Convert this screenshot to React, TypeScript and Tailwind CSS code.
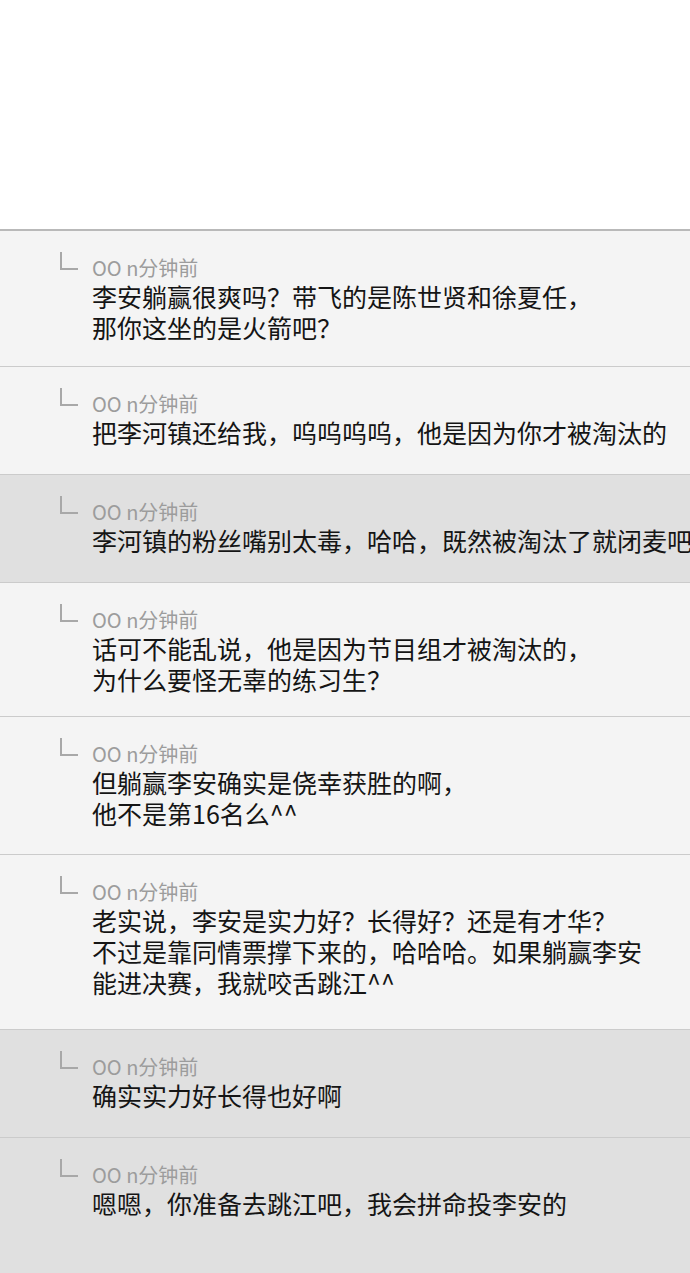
import React from 'react';

type Reply = {
  lines: string[];
  height: string;
  dark?: boolean;
};

const replies: Reply[] = [
  { lines: ['李安躺赢很爽吗？带飞的是陈世贤和徐夏任，', '那你这坐的是火箭吧？'], height: 'h-[136px]' },
  { lines: ['把李河镇还给我，呜呜呜呜，他是因为你才被淘汰的'], height: 'h-[108px]' },
  { lines: ['李河镇的粉丝嘴别太毒，哈哈，既然被淘汰了就闭麦吧'], height: 'h-[108px]', dark: true },
  { lines: ['话可不能乱说，他是因为节目组才被淘汰的，', '为什么要怪无辜的练习生？'], height: 'h-[134px]' },
  { lines: ['但躺赢李安确实是侥幸获胜的啊，', '他不是第16名么^^'], height: 'h-[138px]' },
  {
    lines: ['老实说，李安是实力好？长得好？还是有才华？', '不过是靠同情票撑下来的，哈哈哈。如果躺赢李安', '能进决赛，我就咬舌跳江^^'],
    height: 'h-[175px]',
  },
  { lines: ['确实实力好长得也好啊'], height: 'h-[108px]', dark: true },
  { lines: ['嗯嗯，你准备去跳江吧，我会拼命投李安的'], height: 'h-[135px]', dark: true },
];

const CornerIcon: React.FC = () => (
  <svg width="20" height="20" viewBox="0 0 20 20" className="shrink-0">
    <path d="M2 1 V18 H19" fill="none" stroke="#a8a8a8" strokeWidth="2" />
  </svg>
);

const ReplyRow: React.FC<{ reply: Reply; last: boolean }> = ({ reply, last }) => (
  <div
    className={`${reply.height} ${reply.dark ? 'bg-[#e0e0e0]' : 'bg-[#f4f4f4]'} ${
      last ? '' : 'border-b border-[#cbcbcb]'
    } flex items-start overflow-hidden pl-[59px] pt-[20px]`}
  >
    <CornerIcon />
    <div className="ml-[13px] flex flex-col pt-[4px] whitespace-nowrap">
      <div className="h-[26px] text-[20px] leading-[26px] text-[#9c9c9c]">OO n分钟前</div>
      {reply.lines.map((line, i) => (
        <div key={i} className="text-[25px] leading-[31px] text-[#151515]">
          {line}
        </div>
      ))}
    </div>
  </div>
);

export default function App() {
  return (
    <div
      className="flex h-[1273px] w-[690px] flex-col overflow-hidden bg-white"
      style={{ fontFamily: '"Noto Sans CJK SC", "Noto Sans", sans-serif' }}
    >
      <div className="h-[229px] shrink-0 bg-white" />
      <div className="flex flex-1 flex-col border-t-2 border-[#b9b9b9]">
        {replies.map((r, i) => (
          <ReplyRow key={i} reply={r} last={i === replies.length - 1} />
        ))}
      </div>
    </div>
  );
}
